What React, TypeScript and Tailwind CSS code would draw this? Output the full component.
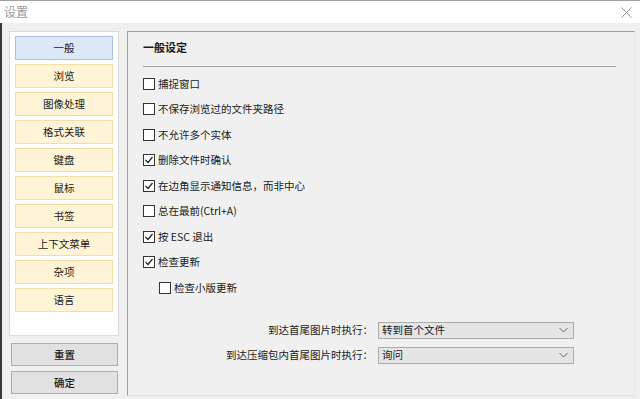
import React from "react";

const navItems = ["一般", "浏览", "图像处理", "格式关联", "键盘", "鼠标", "书签", "上下文菜单", "杂项", "语言"];

const checks: { label: string; checked: boolean; indent?: boolean }[] = [
  { label: "捕捉窗口", checked: false },
  { label: "不保存浏览过的文件夹路径", checked: false },
  { label: "不允许多个实体", checked: false },
  { label: "删除文件时确认", checked: true },
  { label: "在边角显示通知信息，而非中心", checked: true },
  { label: "总在最前(Ctrl+A)", checked: false },
  { label: "按 ESC 退出", checked: true },
  { label: "检查更新", checked: true },
  { label: "检查小版更新", checked: false, indent: true },
];

function CheckBox({ checked }: { checked: boolean }) {
  return (
    <div className="w-[12px] h-[12px] border border-[#333333] bg-white flex items-center justify-center shrink-0">
      {checked && (
        <svg width="10" height="10" viewBox="0 0 10 10">
          <path d="M1.5 5 L4 7.5 L8.5 2" fill="none" stroke="#222" strokeWidth="1.2" />
        </svg>
      )}
    </div>
  );
}

function Chevron() {
  return (
    <svg width="9" height="6" viewBox="0 0 9 6" className="shrink-0">
      <path d="M0.5 1 L4.5 5 L8.5 1" fill="none" stroke="#555" strokeWidth="0.9" />
    </svg>
  );
}

export default function App() {
  return (
    <div className="w-[640px] h-[399px] bg-[#f0f0f0] flex flex-col overflow-hidden font-['Microsoft_YaHei','Noto_Sans_CJK_SC',sans-serif] text-[10.5px] text-[#1a1a1a]">
      <div className="h-[23px] bg-white border-t border-[#a0a0a0] flex items-center justify-between pl-[4px] pr-[8px] shrink-0">
        <span className="text-[12px] text-[#9a9a9a] leading-none">设置</span>
        <svg width="11" height="11" viewBox="0 0 11 11">
          <path d="M0.5 0.5 L10.5 10.5 M10.5 0.5 L0.5 10.5" stroke="#888" strokeWidth="0.9" />
        </svg>
      </div>
      <div className="flex-1 flex border-l-2 border-[#3a3a3a]">
        <div className="w-[125px] shrink-0 pl-[7px] pt-[8px] flex flex-col">
          <div className="w-[110px] h-[305px] bg-white border border-[#dadada] pt-[4px] px-[5px] flex flex-col gap-[4px]">
            {navItems.map((n, i) => (
              <div
                key={n}
                className={
                  i === 0
                    ? "h-[24px] flex items-center justify-center bg-[#dde7f6] border border-[#a9c1e4]"
                    : "h-[24px] flex items-center justify-center bg-[#fff4d6] border border-[#f4dea8]"
                }
              >
                {n}
              </div>
            ))}
          </div>
          <div className="ml-[2px] mt-[7px] w-[107px] h-[23px] bg-[#e1e1e1] border border-[#adadad] flex items-center justify-center font-medium">
            重置
          </div>
          <div className="ml-[2px] mt-[5px] w-[107px] h-[23px] bg-[#e1e1e1] border border-[#adadad] flex items-center justify-center font-medium">
            确定
          </div>
        </div>
        <div className="mt-[8px] mb-[3px] w-[508px] border border-t-[#a0a0a0] border-l-[#a0a0a0] border-r-[#e8e8e8] border-b-[#e0e0e0] flex flex-col">
          <div className="pl-[15px] pt-[7px] h-[23px] flex items-center font-bold text-[11px]">一般设定</div>
          <div className="ml-[15px] mt-[11px] w-[473px] h-px bg-[#a0a0a0]" />
          <div className="mt-[4px] flex flex-col">
            {checks.map((c) => (
              <div
                key={c.label}
                className={c.indent ? "h-[25.5px] flex items-center gap-[3px] pl-[31px]" : "h-[25.5px] flex items-center gap-[3px] pl-[15px]"}
              >
                <CheckBox checked={c.checked} />
                <span>{c.label}</span>
              </div>
            ))}
          </div>
          <div className="mt-[21px] flex flex-col gap-[8px]">
            <div className="flex items-center h-[17px]">
              <div className="w-[245px] text-right">到达首尾图片时执行：</div>
              <div className="ml-[5px] w-[196px] h-[17px] bg-[#e5e5e5] border border-[#acacac] flex items-center justify-between pl-[3px] pr-[5px]">
                <span>转到首个文件</span>
                <Chevron />
              </div>
            </div>
            <div className="flex items-center h-[17px]">
              <div className="w-[245px] text-right">到达压缩包内首尾图片时执行：</div>
              <div className="ml-[5px] w-[196px] h-[17px] bg-[#e5e5e5] border border-[#acacac] flex items-center justify-between pl-[3px] pr-[5px]">
                <span>询问</span>
                <Chevron />
              </div>
            </div>
          </div>
        </div>
      </div>
    </div>
  );
}
